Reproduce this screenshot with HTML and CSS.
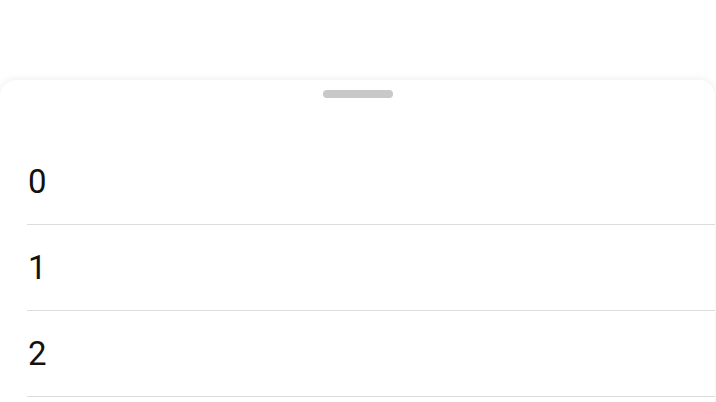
FILE: index.html
```html
<!DOCTYPE html>
<html>
<head>
<meta charset="utf-8">
<link rel="stylesheet" href="styles.css">
</head>
<body>
<div class="page">
  <div class="sheet">
    <div class="handle-wrap"><div class="handle"></div></div>
    <ul class="list">
      <li class="row">0</li>
      <li class="row">1</li>
      <li class="row">2</li>
    </ul>
  </div>
</div>
</body>
</html>
```
FILE: styles.css
```css
html, body {
  margin: 0;
  padding: 0;
  background: #ffffff;
  overflow: hidden;
}
.page {
  width: 716px;
  height: 402px;
  padding-top: 80px;
  box-sizing: border-box;
  font-family: Roboto, "Noto Sans", sans-serif;
}
.sheet {
  background: #ffffff;
  border-radius: 16px 16px 0 0;
  box-shadow: 0 -1px 8px rgba(0, 0, 0, 0.07);
  height: 340px;
  margin-right: 1px;
}
.handle-wrap {
  display: flex;
  justify-content: center;
  padding-top: 10px;
  height: 59px;
  box-sizing: border-box;
}
.handle {
  width: 70px;
  height: 8px;
  border-radius: 4px;
  background: #c8c8c8;
}
.list {
  list-style: none;
  margin: 0;
  padding: 0 0 0 27px;
}
.row {
  height: 85px;
  border-bottom: 1px solid #dcdcdc;
  display: flex;
  align-items: center;
  font-size: 33px;
  color: #111111;
  padding-left: 1px;
}
```
